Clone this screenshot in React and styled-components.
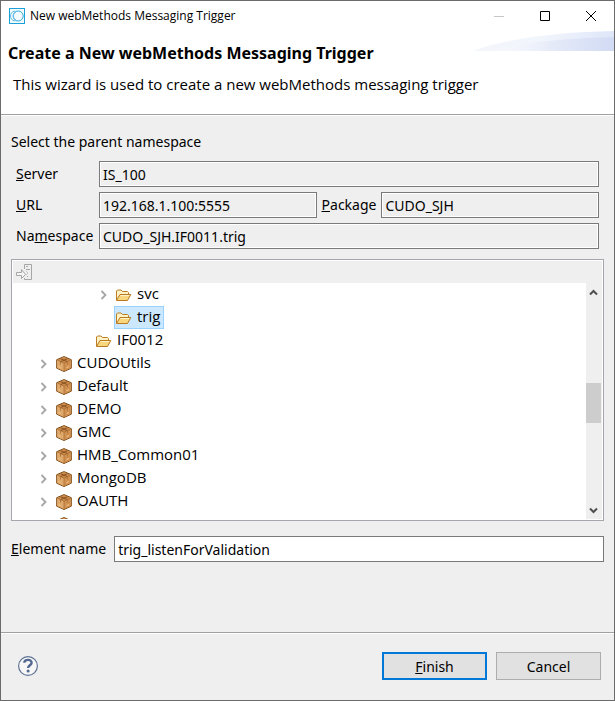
import React from "react";
import styled, { createGlobalStyle, css } from "styled-components";

const GlobalStyle = createGlobalStyle`
  * { box-sizing: border-box; }
  body { margin: 0; background: #efefef; }
  body, button, input {
    font-family: "Noto Sans", "Open Sans", sans-serif;
    font-size: 14px;
    color: #000;
  }
`;

const Dialog = styled.main`
  display: flex;
  flex-direction: column;
  min-height: 100vh;
  border: 1px solid #6b6b6b;
  background: #efefef;
`;

const TitleBar = styled.div`
  display: flex;
  align-items: center;
  height: 30px;
  padding-left: 8px;
  background: #fff;
`;

const TitleText = styled.span`
  flex: 1;
  margin-left: 5px;
  font-family: "Open Sans", "Noto Sans", sans-serif;
  font-size: 12px;
  line-height: 16px;
`;

const WindowButton = styled.button`
  display: flex;
  align-items: center;
  justify-content: center;
  width: 46px;
  height: 30px;
  padding: 0;
  border: 0;
  background: transparent;
  color: ${(p) => (p.disabled ? "#c6c6c6" : "#000")};
`;

const Header = styled.header`
  position: relative;
  height: 84px;
  padding: 10px 7px 0;
  border-bottom: 1px solid #a0a0a0;
  background: #fff;
`;

const Swoosh = styled.svg`
  position: absolute;
  top: 0;
  right: 0;
`;

const Heading = styled.h1`
  position: relative;
  margin: 0;
  font-size: 16px;
  line-height: 24px;
  font-weight: 700;
`;

const Description = styled.p`
  margin: 8px 0 0 5px;
  font-family: "Open Sans", "Noto Sans", sans-serif;
  font-size: 15px;
  line-height: 22px;
`;

const Body = styled.section`
  flex: 1;
  padding: 16px 10px 0;
  border-top: 1px solid #fff;
`;

const Prompt = styled.p`
  margin: 0;
  line-height: 20px;
`;

const Fields = styled.div`
  display: grid;
  grid-template-columns: 78px 1fr auto 1fr;
  gap: 5px;
  align-items: center;
  padding: 9px 5px 10px;
`;

const Label = styled.label`
  line-height: 20px;
  white-space: nowrap;
`;

const TextBox = styled.input`
  grid-column: ${(p) => (p.$wide ? "2 / -1" : "auto")};
  width: 100%;
  min-width: 0;
  height: 26px;
  padding: 0 3px;
  border: 1px solid #7a7a7a;
  border-radius: 0;
  outline: none;
  background: #fff;
  ${(p) => p.readOnly && css`
    background: #efefef;
    box-shadow: inset 0 0 0 1px #fff;
  `}
`;

const TreePanel = styled.div`
  border: 1px solid #a5a7ad;
  padding: 1px;
  background: #fff;
`;

const ToolBar = styled.div`
  display: flex;
  align-items: center;
  height: 22px;
  padding-left: 3px;
  background: #efefef;
`;

const ToolButton = styled.button`
  display: flex;
  padding: 0;
  border: 0;
  background: transparent;
`;

const TreeView = styled.div`
  display: flex;
  height: 236px;
`;

const Tree = styled.ul`
  flex: 1;
  margin: 0;
  padding: 0;
  list-style: none;
  overflow: hidden;
  font-family: "Open Sans", "Noto Sans", sans-serif;
  font-size: 15px;
`;

const indents = { package: 23, folder: 63, child: 83 };

const Row = styled.li`
  display: flex;
  align-items: center;
  height: 23px;
  padding-left: ${(p) => indents[p.$level]}px;
`;

const Twisty = styled.span`
  display: flex;
  justify-content: center;
  flex: none;
  width: 18px;
  padding-right: 4px;
`;

const Item = styled.span`
  display: flex;
  align-items: center;
  gap: 5px;
  height: 23px;
  padding: 0 3px 0 ${(p) => (p.$folder ? 0 : 1)}px;
  border: 1px solid ${(p) => (p.$selected ? "#99d1ff" : "transparent")};
  background: ${(p) => (p.$selected ? "#cce8ff" : "transparent")};
`;

const NodeName = styled.span`
  padding-bottom: 2px;
  line-height: 19px;
`;

const ScrollBar = styled.div`
  display: flex;
  flex-direction: column;
  width: 16px;
  background: #efefef;
`;

const ScrollButton = styled.button`
  display: flex;
  align-items: center;
  justify-content: center;
  width: 15px;
  height: 18px;
  padding: 0;
  border: 0;
  background: transparent;
`;

const Track = styled.div`
  display: flex;
  flex: 1;
  padding-top: 82px;
`;

const Thumb = styled.div`
  width: 15px;
  height: 40px;
  background: #cdcdcd;
`;

const NameRow = styled.div`
  display: flex;
  align-items: center;
  gap: 8px;
  padding: 15px 0 10px;
`;

const Footer = styled.footer`
  display: flex;
  align-items: center;
  gap: 9px;
  height: 68px;
  padding: 0 13px 1px 16px;
  border-top: 1px solid #a0a0a0;
  box-shadow: inset 0 1px 0 #fff;
`;

const HelpButton = styled.button`
  display: flex;
  margin-right: auto;
  padding: 0;
  border: 0;
  background: transparent;
`;

const ActionButton = styled.button`
  width: 105px;
  height: 28px;
  padding: 0;
  border: ${(p) => (p.$primary ? "2px solid #0078d7" : "1px solid #adadad")};
  background: #e1e1e1;
`;

const AppIcon = () => (
  <svg width="16" height="16" viewBox="0 0 16 16" fill="none" aria-hidden="true">
    <rect x=".5" y=".5" width="15" height="15" fill="#f3fbfe" stroke="#1ba0d8" />
    <circle cx="9.200" cy="8" r="5" stroke="#35a9dc" />
    <path d="M6 3C2.800 3.500 1.500 5.500 1.500 8s1.300 4.500 4.500 5M7.500 3.300C5.200 4.500 4.300 6 4.300 8s.9 3.500 3.200 4.700" stroke="#62bce3" />
  </svg>
);

const ChevronRight = () => (
  <svg width="7" height="10" viewBox="0 0 7 10" fill="none" aria-hidden="true">
    <path d="M1.500 1 5.500 5 1.500 9" stroke="#a6a6a6" strokeWidth="1.800" />
  </svg>
);

const ScrollArrow = ({ down }) => (
  <svg width="9" height="7" viewBox="0 0 9 7" fill="none" aria-hidden="true">
    <path d={down ? "M1 1.500 4.500 5 8 1.500" : "M1 5.500 4.500 2 8 5.500"} stroke="#505050" strokeWidth="2" />
  </svg>
);

const FolderIcon = () => (
  <svg width="17" height="16" viewBox="0 0 17 16" aria-hidden="true">
    <path d="M1.500 13V4l1-1h3.500l1.500 1.500h5l1 1v2" fill="#fff2c5" stroke="#bd7d24" />
    <path d="M1.500 13.500 5 7.500h10.800L12.500 13.500z" fill="#f8d77f" stroke="#b97920" strokeLinejoin="round" />
    <path d="M5.600 8.500h8.700" stroke="#fff3c9" />
  </svg>
);

const PackageIcon = () => (
  <svg width="16" height="16" viewBox="0 0 16 16" aria-hidden="true">
    <path d="M8 .6 15.300 3.700v8.500L8 15.500.7 12.200V3.700z" fill="#d99b5b" stroke="#7d4b14" strokeLinejoin="round" />
    <path d="M8 1.200 14.700 4 8 7.200 1.300 4z" fill="#c98a4c" />
    <path d="M8 7.200 14.800 4v8L8 15z" fill="#d09050" />
    <path d="M1.200 4 8 7.200V15l-6.800-3z" fill="#e0a96c" />
    <path d="M8 7v8M1.500 4.200 8 7.200l6.500-3" fill="none" stroke="#a86e36" strokeWidth=".8" />
    <path d="M4.600 2.700 11.300 5.600M11.400 2.700 4.700 5.600" fill="none" stroke="#8d5420" />
    <path d="M4.500 6v2.500M11.500 6v2.500" stroke="#b5763a" />
    <path d="m2.500 10.500 2 1M10.500 11.700l2.500-1.200" stroke="#f4c68d" />
  </svg>
);

const LinkIcon = () => (
  <svg width="17" height="17" viewBox="0 0 17 17" fill="none" stroke="#a6a6a6" aria-hidden="true">
    <path d="M8.500 5V.500h7v15h-7V14" />
    <path d="M.5 8.500h5v-3l4 5-4 4v-3h-5z" fill="#f5f5f5" />
    <path d="M10 2.500h2M10 5.500h4M10.500 7.500l1 1M11.500 9.500l-1 1M11 12.500h1" />
  </svg>
);

const HelpIcon = () => (
  <svg width="22" height="22" viewBox="0 0 22 22" fill="none" aria-hidden="true">
    <circle cx="11" cy="11" r="9.400" fill="#f7f7f7" stroke="#5f7395" strokeWidth="1.200" />
    <path d="M7.300 7.700C7.500 3.800 14.900 4 14.600 7.800c-.2 2.400-3.500 2.600-3.500 5.200" stroke="#536991" strokeWidth="2.400" />
    <circle cx="11.100" cy="16" r="1.500" fill="#536991" />
  </svg>
);

const nodes = [
  { name: "svc", level: "child", folder: true, expandable: true },
  { name: "trig", level: "child", folder: true, selected: true },
  { name: "IF0012", level: "folder", folder: true },
  ...["CUDOUtils", "Default", "DEMO", "GMC", "HMB_Common01", "MongoDB", "OAUTH", ""].map((name) => ({
    name, level: "package", expandable: Boolean(name),
  })),
];

export default function App() {
  return (
    <>
      <GlobalStyle />
      <Dialog role="dialog" aria-labelledby="heading">
        <TitleBar>
          <AppIcon />
          <TitleText>New webMethods Messaging Trigger</TitleText>
          <WindowButton aria-label="Minimize" disabled>
            <svg width="10" height="10"><path d="M0 5.500h10" stroke="currentColor" /></svg>
          </WindowButton>
          <WindowButton aria-label="Maximize">
            <svg width="10" height="10"><path d="M.5.5h9v9h-9z" fill="none" stroke="currentColor" /></svg>
          </WindowButton>
          <WindowButton aria-label="Close">
            <svg width="10" height="10"><path d="m0 0 10 10M10 0 0 10" stroke="currentColor" /></svg>
          </WindowButton>
        </TitleBar>
        <Header>
          <Swoosh width="141" height="20" viewBox="0 0 141 20" aria-hidden="true">
            <defs>
              <linearGradient id="sky">
                <stop offset="0" stopColor="#f3f7fc" />
                <stop offset=".5" stopColor="#f1f5fc" />
                <stop offset="1" stopColor="#dee6f8" />
              </linearGradient>
              <linearGradient id="haze">
                <stop offset="0" stopColor="#fff" stopOpacity="0" />
                <stop offset=".5" stopColor="#e6ebf8" />
                <stop offset="1" stopColor="#d2dbf5" />
              </linearGradient>
            </defs>
            <path d="M0 20C34 7 88 1 141 0v20z" fill="url(#sky)" />
            <path d="M12 20C44 12 91 7 141 6v14z" fill="url(#haze)" />
          </Swoosh>
          <Heading id="heading">Create a New webMethods Messaging Trigger</Heading>
          <Description>This wizard is used to create a new webMethods messaging trigger</Description>
        </Header>
        <Body>
          <Prompt>Select the parent namespace</Prompt>
          <Fields>
            <Label htmlFor="server"><u>S</u>erver</Label>
            <TextBox id="server" $wide readOnly defaultValue="IS_100" />
            <Label htmlFor="url"><u>U</u>RL</Label>
            <TextBox id="url" readOnly defaultValue="192.168.1.100:5555" />
            <Label htmlFor="package"><u>P</u>ackage</Label>
            <TextBox id="package" readOnly defaultValue="CUDO_SJH" />
            <Label htmlFor="namespace">Na<u>m</u>espace</Label>
            <TextBox id="namespace" $wide readOnly defaultValue="CUDO_SJH.IF0011.trig" />
          </Fields>
          <TreePanel>
            <ToolBar>
              <ToolButton aria-label="Link with server"><LinkIcon /></ToolButton>
            </ToolBar>
            <TreeView>
              <Tree role="tree" aria-label="Parent namespace">
                {nodes.map((node) => (
                  <Row key={node.name} role="treeitem" aria-selected={Boolean(node.selected)} $level={node.level}>
                    <Twisty>{node.expandable && <ChevronRight />}</Twisty>
                    <Item $selected={node.selected} $folder={node.folder}>
                      {node.folder ? <FolderIcon /> : <PackageIcon />}
                      <NodeName>{node.name}</NodeName>
                    </Item>
                  </Row>
                ))}
              </Tree>
              <ScrollBar>
                <ScrollButton aria-label="Scroll up"><ScrollArrow /></ScrollButton>
                <Track><Thumb /></Track>
                <ScrollButton aria-label="Scroll down"><ScrollArrow down /></ScrollButton>
              </ScrollBar>
            </TreeView>
          </TreePanel>
          <NameRow>
            <Label htmlFor="element"><u>E</u>lement name</Label>
            <TextBox id="element" defaultValue="trig_listenForValidation" />
          </NameRow>
        </Body>
        <Footer>
          <HelpButton aria-label="Help"><HelpIcon /></HelpButton>
          <ActionButton $primary><u>F</u>inish</ActionButton>
          <ActionButton>Cancel</ActionButton>
        </Footer>
      </Dialog>
    </>
  );
}
